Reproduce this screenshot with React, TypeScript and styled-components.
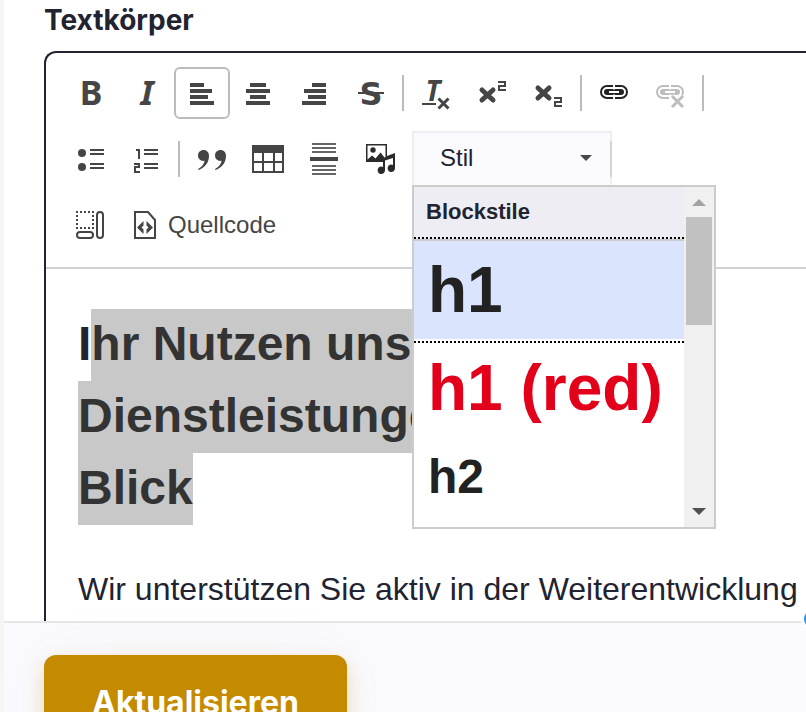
import React from "react";
import styled, { createGlobalStyle } from "styled-components";

const ink = "#222330";
const iconInk = "#454545";
const arial = '"Liberation Sans", Arial, sans-serif';
const inter = "Inter, sans-serif";

const GlobalStyle = createGlobalStyle`
  *, *::before, *::after { box-sizing: border-box; }
  body { margin: 0; background: #fff; color: ${ink}; font-family: ${arial}; }
  button { font: inherit; cursor: pointer; }
`;

const Page = styled.div`
  height: 100vh;
  overflow: hidden;
  border-left: 4px solid #f5f5f5;
`;

const Field = styled.main`
  padding-left: 40px;
`;

const Label = styled.div`
  margin-bottom: 11px;
  font: 700 28px/40px ${inter};
`;

const Editor = styled.div`
  border: 2px solid ${ink};
  border-right: 0;
  border-bottom: 0;
  border-top-left-radius: 12px;
`;

const Toolbar = styled.div`
  display: flex;
  flex-direction: column;
  gap: 12px;
  padding: 14px 0 16px 16px;
  border-bottom: 2px solid #d1d1d6;
`;

const ToolRow = styled.div`
  display: flex;
  align-items: center;
`;

const ToolButton = styled.button<{ $active?: boolean }>`
  display: flex;
  align-items: center;
  gap: 6px;
  height: 52px;
  padding: 0 10px;
  border: 2px solid ${(p) => (p.$active ? "#bcbcbc" : "transparent")};
  border-radius: 6px;
  background: none;
  color: ${iconInk};
  font-size: 24px;
  &:disabled { color: #bdbdbd; }
`;

const Separator = styled.span`
  width: 2px;
  height: 36px;
  margin: 0 4px;
  background: #bcbcbc;
`;

const Glyph = styled.svg`
  display: block;
  flex: none;
  width: 32px;
  height: 32px;
  overflow: visible;
  fill: currentColor;
`;

const Letter = styled.text<{ $italic?: boolean; $wide?: boolean; $size?: number }>`
  font-family: ${(p) => (p.$wide ? '"DejaVu Sans"' : '"Noto Sans"')}, sans-serif;
  font-weight: 700;
  font-size: ${(p) => p.$size ?? 34}px;
  font-style: ${(p) => (p.$italic ? "italic" : "normal")};
  text-anchor: middle;
`;

const Combo = styled.div`
  position: relative;
  margin-left: 4px;
  &::after {
    content: "";
    position: absolute;
    top: 10px;
    right: 0;
    width: 2px;
    height: 36px;
    background: #d4d4d8;
  }
`;

const ComboButton = styled.button`
  display: flex;
  align-items: center;
  justify-content: space-between;
  width: 200px;
  height: 56px;
  padding: 0 18px 2px 26px;
  border: 2px solid #ededf4;
  background: #fafaff;
  color: ${ink};
  font-size: 24px;
`;

const Triangle = styled.span<{ $up?: boolean; $half: number; $color: string }>`
  border: solid transparent;
  border-width: 0 ${(p) => p.$half}px;
  ${(p) => (p.$up ? "border-bottom" : "border-top")}: ${(p) => p.$half}px solid ${(p) => p.$color};
`;

const Menu = styled.div`
  position: absolute;
  z-index: 2;
  top: calc(100% - 2px);
  left: 0;
  display: flex;
  width: 304px;
  height: 344px;
  border: 2px solid #ccc;
  background: #fff;
`;

const MenuBody = styled.div`
  flex: 1;
  overflow: hidden;
`;

const MenuTitle = styled.h2`
  margin: 0;
  padding: 12px 12px 14px;
  border-bottom: 2px solid #ccc;
  background: #ededf3;
  font-size: 22px;
  line-height: 26px;
`;

const StyleList = styled.ul`
  margin: 0;
  padding: 0;
  list-style: none;
`;

const StyleOption = styled.a<{ $size: number; $color?: string; $selected?: boolean }>`
  display: block;
  padding: 12px 14px;
  background: ${(p) => (p.$selected ? "#dae4fc" : "transparent")};
  outline: ${(p) => (p.$selected ? "2px dotted #000" : "none")};
  outline-offset: 2px;
  color: ${(p) => p.$color ?? "#222"};
  font-size: ${(p) => p.$size}px;
  font-weight: 700;
  text-decoration: none;
  white-space: nowrap;
`;

const ScrollTrack = styled.div`
  display: flex;
  flex-direction: column;
  align-items: center;
  width: 30px;
  padding: 12px 2px;
  background: #f0f0f0;
`;

const ScrollThumb = styled.span`
  align-self: stretch;
  height: 108px;
  margin: 11px 0 auto;
  background: #c1c1c1;
`;

const Content = styled.div`
  padding: 39px 0 8px 32px;
`;

const Heading = styled.h1`
  margin: 0 0 41px;
  font-size: 48px;
  line-height: 72px;
`;

const Selection = styled.mark`
  padding: 8px 0 11px;
  background: #c8c8c8;
  color: #333;
`;

const Paragraph = styled.p`
  margin: 0;
  font-size: 32px;
  line-height: 48px;
`;

const Footer = styled.footer`
  position: relative;
  padding: 32px 40px;
  border-top: 2px solid #e6e6ea;
  background: #fafaff;
`;

const SubmitButton = styled.button`
  padding: 24px 48px;
  border: 0;
  border-radius: 12px;
  background: #c48a00;
  box-shadow: 0 8px 20px rgba(196, 138, 0, 0.25), 0 0 60px rgba(196, 138, 0, 0.06);
  color: #fff;
  font: 700 32px/48px ${inter};
`;

const HelpBubble = styled.span`
  position: absolute;
  top: -16px;
  right: -19px;
  width: 24px;
  height: 24px;
  border: 3px solid #fff;
  border-radius: 50%;
  background: #1e96fa;
`;

type Bar = [x: number, y: number, w: number, h: number];

const Bars = ({ items }: { items: Bar[] }) => (
  <>
    {items.map(([x, y, width, height], i) => (
      <rect key={i} x={x} y={y} width={width} height={height} />
    ))}
  </>
);

const Chain = ({ outline }: { outline: string }) => (
  <g fill="none">
    <g stroke={outline} strokeWidth="6">
      <path d="M15 11H9a4 4 0 0 0 0 8h6M17 11h6a4 4 0 0 1 0 8h-6" />
    </g>
    <path d="M10 15h12" stroke={outline} strokeWidth="5" strokeLinecap="round" />
    <g stroke="#fff" strokeWidth="2">
      <path d="M16 11H9a4 4 0 0 0 0 8h7M16 11h7a4 4 0 0 1 0 8h-7" />
      <path d="M11 15h10" />
    </g>
  </g>
);

const icons = {
  bold: <Letter x="17" y="28">B</Letter>,
  italic: <Letter x="17" y="28" $italic>I</Letter>,
  left: <Bars items={[[4, 6, 14, 4], [4, 12, 22, 4], [4, 18, 18, 4], [4, 24, 24, 4]]} />,
  center: <Bars items={[[8, 6, 16, 4], [4, 12, 24, 4], [8, 18, 16, 4], [4, 24, 24, 4]]} />,
  right: <Bars items={[[14, 6, 14, 4], [6, 12, 22, 4], [10, 18, 18, 4], [4, 24, 24, 4]]} />,
  strike: (
    <>
      <Letter x="17" y="28" $size={32} $wide>S</Letter>
      <rect x="4" y="15" width="26" height="2" />
    </>
  ),
  clear: (
    <>
      <Letter x="13" y="24" $size={28} $italic>T</Letter>
      <rect x="2" y="26" width="14" height="2" />
      <path d="M18.500 21.500l10 10M28.500 21.500l-10 10" stroke="currentColor" strokeWidth="3" />
    </>
  ),
  sup: (
    <g fill="none" stroke="currentColor">
      <path d="M6 13l11 10M17 13L6 23" strokeWidth="5" strokeLinecap="round" />
      <path d="M22 5h7v4h-6v4h7" strokeWidth="2" />
    </g>
  ),
  sub: (
    <g fill="none" stroke="currentColor">
      <path d="M6 11l11 10M17 11L6 21" strokeWidth="5" strokeLinecap="round" />
      <path d="M22 21h7v4h-6v4h7" strokeWidth="2" />
    </g>
  ),
  link: <Chain outline="#222" />,
  unlink: (
    <>
      <Chain outline="currentColor" />
      <path d="M18 19l11 11M29 19L18 30" stroke="#fff" strokeWidth="6" />
      <path d="M18 19l11 11M29 19L18 30" stroke="currentColor" strokeWidth="3" />
    </>
  ),
  bullets: (
    <>
      <circle cx="8" cy="10" r="4" />
      <circle cx="8" cy="24" r="4" />
      <Bars items={[[16, 6, 14, 2], [16, 10, 14, 2], [16, 20, 14, 2], [16, 24, 14, 2]]} />
    </>
  ),
  numbers: (
    <>
      <path d="M6 7h3v9M4 21h5v3H5v5h5" fill="none" stroke="currentColor" strokeWidth="2" />
      <Bars items={[[14, 6, 14, 2], [14, 10, 14, 2], [14, 20, 14, 2], [14, 24, 14, 2]]} />
    </>
  ),
  quote: (
    <>
      <path d="M7.500 7c3.500 0 5.500 2.500 5.500 6 0 6.500-4 11.500-10.500 14l-.5-1c4-2.300 6.300-5 6.500-8.200C5 18.600 2 16 2 12.500 2 9.300 4.500 7 7.500 7z" />
      <path d="M24.500 7c3.500 0 5.500 2.500 5.500 6 0 6.500-4 11.500-10.500 14l-.5-1c4-2.300 6.300-5 6.500-8.200-3.500.8-6.500-1.800-6.500-5.300C19 9.300 21.500 7 24.500 7z" />
    </>
  ),
  table: (
    <Bars items={[[0, 2, 32, 8], [0, 2, 2, 28], [30, 2, 2, 28], [0, 28, 32, 2], [10, 8, 2, 22], [21, 8, 2, 22], [0, 18, 32, 2]]} />
  ),
  rule: (
    <>
      <g opacity="0.82">
        <Bars items={[[4, 0, 24, 2], [4, 4, 24, 2], [4, 8, 24, 2], [4, 22, 24, 2], [4, 26, 24, 2], [4, 30, 24, 2]]} />
      </g>
      <rect x="2" y="14" width="28" height="4" />
    </>
  ),
  media: (
    <g fill="#2b2b2b">
      <path d="M2 1h21v12l8-3v15.500a3.700 3.700 0 1 1-2-3.500v-7l-8 2.500v10a3.700 3.700 0 1 1-2-3.500V19H2zM3.500 2.500v14L8 12.500l3.500 3 5-6 4 5 1-.5V2.500z" fillRule="evenodd" />
      <circle cx="9" cy="7" r="2.700" />
    </g>
  ),
  blocks: (
    <>
      <rect x="3" y="3" width="16" height="16" fill="none" stroke="currentColor" strokeWidth="2" strokeDasharray="2 2" strokeDashoffset="1" />
      <rect x="23" y="3" width="6" height="26" rx="3" fill="none" stroke="currentColor" strokeWidth="2" />
      <rect x="3" y="23" width="16" height="6" rx="3" fill="none" stroke="currentColor" strokeWidth="2" />
    </>
  ),
  source: (
    <>
      <path d="M5 3h13l7 8v18H5z" fill="none" stroke="currentColor" strokeWidth="2" />
      <path d="M13.500 12v4.500L11.500 18.500l2 2V25L7 18.500zM16.500 12v4.500l2 2-2 2V25l6.500-6.500z" />
    </>
  ),
};

type IconName = keyof typeof icons;

const Icon = ({ name }: { name: IconName }) => (
  <Glyph viewBox="0 0 32 32" aria-hidden="true">
    {icons[name]}
  </Glyph>
);

type ToolProps = { icon: IconName; label: string; active?: boolean; disabled?: boolean };

const Tool = ({ icon, label, active, disabled }: ToolProps) => (
  <ToolButton type="button" aria-label={label} aria-pressed={active} disabled={disabled} $active={active}>
    <Icon name={icon} />
  </ToolButton>
);

const StyleMenu = () => (
  <Menu>
    <MenuBody>
      <MenuTitle>Blockstile</MenuTitle>
      <StyleList>
        <li><StyleOption href="#h1" $size={64} $selected>h1</StyleOption></li>
        <li><StyleOption href="#h1-red" $size={64} $color="#e2001a">h1 (red)</StyleOption></li>
        <li><StyleOption href="#h2" $size={48}>h2</StyleOption></li>
      </StyleList>
    </MenuBody>
    <ScrollTrack>
      <Triangle $up $half={7} $color="#a3a3a3" />
      <ScrollThumb />
      <Triangle $half={7} $color="#505050" />
    </ScrollTrack>
  </Menu>
);

export default function App() {
  return (
    <>
      <GlobalStyle />
      <Page>
        <Field>
          <Label id="body-label">Textkörper</Label>
          <Editor>
            <Toolbar role="toolbar">
              <ToolRow>
                <Tool icon="bold" label="Fett" />
                <Tool icon="italic" label="Kursiv" />
                <Tool icon="left" label="Linksbündig" active />
                <Tool icon="center" label="Zentriert" />
                <Tool icon="right" label="Rechtsbündig" />
                <Tool icon="strike" label="Durchgestrichen" />
                <Separator />
                <Tool icon="clear" label="Formatierung entfernen" />
                <Tool icon="sup" label="Hochgestellt" />
                <Tool icon="sub" label="Tiefgestellt" />
                <Separator />
                <Tool icon="link" label="Link einfügen" />
                <Tool icon="unlink" label="Link entfernen" disabled />
                <Separator />
              </ToolRow>
              <ToolRow>
                <Tool icon="bullets" label="Liste" />
                <Tool icon="numbers" label="Nummerierte Liste" />
                <Separator />
                <Tool icon="quote" label="Zitatblock" />
                <Tool icon="table" label="Tabelle" />
                <Tool icon="rule" label="Horizontale Linie" />
                <Tool icon="media" label="Medien" />
                <Combo>
                  <ComboButton type="button" aria-haspopup="true" aria-expanded="true">
                    Stil
                    <Triangle $half={6} $color="#484848" />
                  </ComboButton>
                  <StyleMenu />
                </Combo>
              </ToolRow>
              <ToolRow>
                <Tool icon="blocks" label="Blöcke anzeigen" />
                <ToolButton type="button">
                  <Icon name="source" />
                  Quellcode
                </ToolButton>
              </ToolRow>
            </Toolbar>
            <Content role="textbox" aria-multiline="true" aria-labelledby="body-label">
              <Heading>
                I<Selection>hr Nutzen unserer Dienstleistungen auf einen Blick</Selection>
              </Heading>
              <Paragraph>Wir unterstützen Sie aktiv in der Weiterentwicklung</Paragraph>
            </Content>
          </Editor>
        </Field>
        <Footer>
          <SubmitButton type="submit">Aktualisieren</SubmitButton>
          <HelpBubble />
        </Footer>
      </Page>
    </>
  );
}
